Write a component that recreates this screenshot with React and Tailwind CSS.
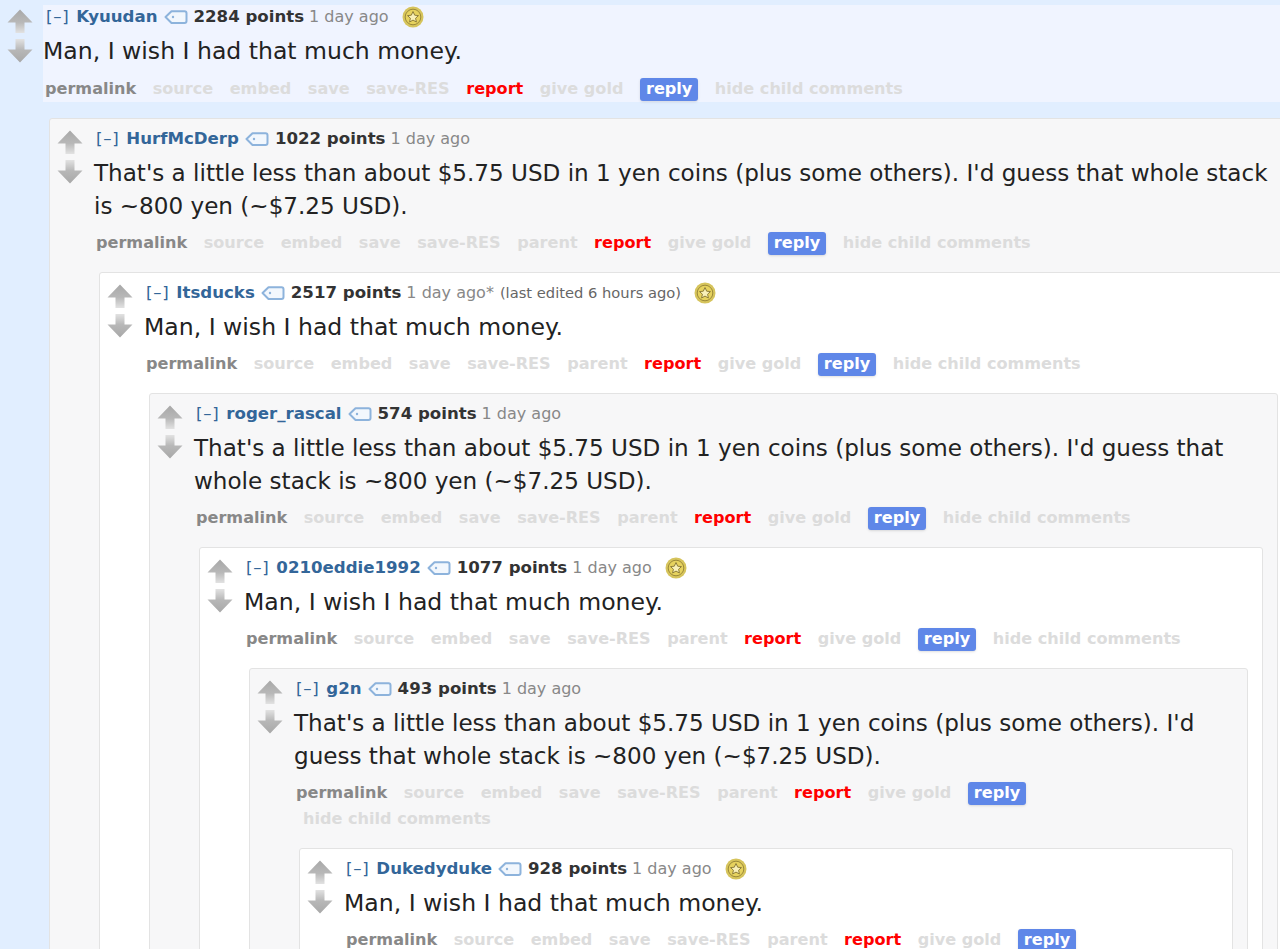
const FONT = "font-['DejaVu_Sans',Verdana,sans-serif]";

const LONG = "That's a little less than about $5.75 USD in 1 yen coins (plus some others). I'd guess that whole stack is ~800 yen (~$7.25 USD).";
const SHORT = "Man, I wish I had that much money.";

function Arrow({ down, id }) {
  return (
    <svg width="26" height="24" viewBox="0 0 26 24" className="block">
      <defs>
        <linearGradient id={id} x1="0" y1={down ? "1" : "0"} x2="0" y2={down ? "0" : "1"}>
          <stop offset="0" stopColor="#a8a8a8" />
          <stop offset="0.55" stopColor="#b8b8b8" />
          <stop offset="1" stopColor="#e2e2e2" />
        </linearGradient>
      </defs>
      <path
        d={down ? "M8.5 0H17.5V10.5H25.5L13 23.5L0.5 10.5H8.5Z" : "M13 0.5L25.5 13.5H17.5V24H8.5V13.5H0.5Z"}
        fill={`url(#${id})`}
      />
    </svg>
  );
}

function Tag() {
  return (
    <svg width="24" height="16" viewBox="0 0 24 16" className="mx-[6px] shrink-0">
      <path
        d="M1.5 8L7.5 2.2H20.5C21.6 2.2 22.5 3.1 22.5 4.2V12C22.5 13.1 21.6 14 20.5 14H7.5Z"
        fill="#f2f7fd"
        stroke="#8db3dc"
        strokeWidth="2"
        strokeLinejoin="round"
      />
      <circle cx="9" cy="8" r="1.2" fill="#8db3dc" />
    </svg>
  );
}

function Coin() {
  return (
    <svg width="22" height="22" viewBox="0 0 22 22" className="ml-[13px] shrink-0">
      <circle cx="11" cy="11" r="10.5" fill="#d6c45c" />
      <circle cx="11" cy="11" r="7.8" fill="#e6d25e" stroke="#9c8a3a" strokeWidth="1" />
      <path d="M11 5.5L12.7 9.2L16.5 9.6L13.6 12.2L14.4 16L11 14.1L7.6 16L8.4 12.2L5.5 9.6L9.3 9.2Z" fill="#f8f0b8" stroke="#8f7f3a" strokeWidth="1" strokeLinejoin="round" />
    </svg>
  );
}

function Actions({ parent, root }) {
  const dim = "text-[#dcdcdc]";
  const item = "pl-[7px] pr-[9.5px] h-[26px] flex items-center whitespace-nowrap";
  return (
    <div className={`flex flex-wrap ml-[2px] text-[16.1px] font-bold ${root ? "mt-[8px]" : "mt-[7px]"}`}>
      <span className="pr-[9.5px] h-[26px] flex items-center text-[#888888]">permalink</span>
      <span className={`${item} ${dim}`}>source</span>
      <span className={`${item} ${dim}`}>embed</span>
      <span className={`${item} ${dim}`}>save</span>
      <span className={`${item} ${dim}`}>save-RES</span>
      {parent && <span className={`${item} ${dim}`}>parent</span>}
      <span className={`${item} text-[#ff0000]`}>report</span>
      <span className={`${item} ${dim}`}>give gold</span>
      <span className={item}>
        <span className="bg-[#5f87e8] text-white rounded-[3px] h-[23px] px-[6px] flex items-center shadow-sm">reply</span>
      </span>
      <span className={`${item} ${dim}`}>hide child comments</span>
    </div>
  );
}

function Comment({ c, level = 0, children }) {
  const root = level === 0;
  const frame = root
    ? "w-[1322px]"
    : `border border-[#e3e3e3] rounded-[3px] mt-[16px] ml-[49px] mr-[14px] ${level % 2 === 1 ? "bg-[#f7f7f8]" : "bg-white"}`;
  return (
    <div className={frame}>
      <div className={`flex ${root ? "" : "pt-[10px]"}`}>
        <div className={`shrink-0 flex flex-col gap-[6px] ${root ? "w-[43px] pl-[7px] pt-[9px]" : "w-[44px] pl-[7px] pt-[1px]"}`}>
          <Arrow id={`up${level}`} />
          <Arrow id={`down${level}`} down />
        </div>
        <div className={`flex-1 min-w-0 pr-[15px] ${root ? "bg-[#f0f4ff] pt-[2px] mt-[5px]" : ""}`}>
          <div className={`flex items-center h-[20px] text-[16.6px] whitespace-nowrap ${root ? "ml-[3px]" : "ml-[2px]"}`}>
            <span className="text-[#336699] tracking-[0.7px]">[–]</span>
            <span className="ml-[7px] font-bold text-[#336699]">{c.author}</span>
            <Tag />
            <span className="font-bold text-[#333333]">{c.points} points</span>
            <span className="ml-[5px] text-[16px] text-[#888888]">1 day ago{c.edited && "*"}</span>
            {c.edited && <span className="ml-[6px] text-[14.7px] text-[#666666]">(last edited 6 hours ago)</span>}
            {c.gold && <Coin />}
          </div>
          <p className={`mt-[8px] leading-[33px] text-[#222222] ${c.text === SHORT ? "text-[23.55px]" : "text-[23.08px]"}`}>{c.text}</p>
          <Actions parent={!root} root={root} />
        </div>
      </div>
      <div className={root ? "" : "pb-[16px]"}>{children}</div>
    </div>
  );
}

export default function App() {
  return (
    <div className={`${FONT} h-screen w-full overflow-hidden bg-[#e1eeff]`}>
      <Comment c={{ author: "Kyuudan", points: 2284, gold: true, text: SHORT }}>
        <Comment level={1} c={{ author: "HurfMcDerp", points: 1022, text: LONG }}>
          <Comment level={2} c={{ author: "Itsducks", points: 2517, edited: true, gold: true, text: SHORT }}>
            <Comment level={3} c={{ author: "roger_rascal", points: 574, text: LONG }}>
              <Comment level={4} c={{ author: "0210eddie1992", points: 1077, gold: true, text: SHORT }}>
                <Comment level={5} c={{ author: "g2n", points: 493, text: LONG }}>
                  <Comment level={6} c={{ author: "Dukedyduke", points: 928, gold: true, text: SHORT }} />
                </Comment>
              </Comment>
            </Comment>
          </Comment>
        </Comment>
      </Comment>
    </div>
  );
}
